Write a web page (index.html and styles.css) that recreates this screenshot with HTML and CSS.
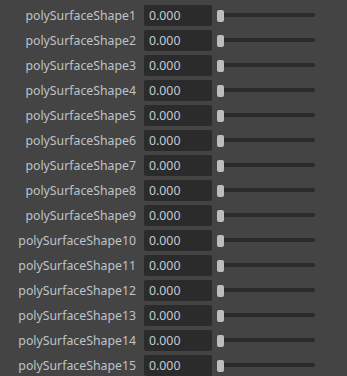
FILE: index.html
```html
<!DOCTYPE html>
<html lang="en">

<head>
    <meta charset="UTF-8">
    <title>Blend Shapes</title>
    <link rel="stylesheet" href="styles.css">
</head>

<body>
    <div class="panel">
        <div class="row"><label class="name">polySurfaceShape1</label><div class="field">0.000</div><div class="slider"><span class="track"></span><span class="handle"></span></div></div>
        <div class="row"><label class="name">polySurfaceShape2</label><div class="field">0.000</div><div class="slider"><span class="track"></span><span class="handle"></span></div></div>
        <div class="row"><label class="name">polySurfaceShape3</label><div class="field">0.000</div><div class="slider"><span class="track"></span><span class="handle"></span></div></div>
        <div class="row"><label class="name">polySurfaceShape4</label><div class="field">0.000</div><div class="slider"><span class="track"></span><span class="handle"></span></div></div>
        <div class="row"><label class="name">polySurfaceShape5</label><div class="field">0.000</div><div class="slider"><span class="track"></span><span class="handle"></span></div></div>
        <div class="row"><label class="name">polySurfaceShape6</label><div class="field">0.000</div><div class="slider"><span class="track"></span><span class="handle"></span></div></div>
        <div class="row"><label class="name">polySurfaceShape7</label><div class="field">0.000</div><div class="slider"><span class="track"></span><span class="handle"></span></div></div>
        <div class="row"><label class="name">polySurfaceShape8</label><div class="field">0.000</div><div class="slider"><span class="track"></span><span class="handle"></span></div></div>
        <div class="row"><label class="name">polySurfaceShape9</label><div class="field">0.000</div><div class="slider"><span class="track"></span><span class="handle"></span></div></div>
        <div class="row"><label class="name">polySurfaceShape10</label><div class="field">0.000</div><div class="slider"><span class="track"></span><span class="handle"></span></div></div>
        <div class="row"><label class="name">polySurfaceShape11</label><div class="field">0.000</div><div class="slider"><span class="track"></span><span class="handle"></span></div></div>
        <div class="row"><label class="name">polySurfaceShape12</label><div class="field">0.000</div><div class="slider"><span class="track"></span><span class="handle"></span></div></div>
        <div class="row"><label class="name">polySurfaceShape13</label><div class="field">0.000</div><div class="slider"><span class="track"></span><span class="handle"></span></div></div>
        <div class="row"><label class="name">polySurfaceShape14</label><div class="field">0.000</div><div class="slider"><span class="track"></span><span class="handle"></span></div></div>
        <div class="row"><label class="name">polySurfaceShape15</label><div class="field">0.000</div><div class="slider"><span class="track"></span><span class="handle"></span></div></div>
    </div>
</body>

</html>
```

FILE: styles.css
```css
body {
    margin: 0;
    background-color: #444444;
    font-family: 'Noto Sans', 'Open Sans', sans-serif;
    font-size: 12.3px;
    color: #bfc3c8;
    overflow: hidden;
}

.panel {
    display: flex;
    flex-direction: column;
    gap: 4px;
    padding-top: 5px;
}

.row {
    display: flex;
    align-items: center;
    height: 21px;
}

.name {
    width: 136px;
    text-align: right;
    white-space: nowrap;
    margin-right: 8px;
}

.field {
    width: 68px;
    height: 21px;
    box-sizing: border-box;
    padding-left: 5px;
    line-height: 21px;
    background-color: #2b2b2b;
    border-radius: 2px;
    color: #c4ccd4;
}

.slider {
    position: relative;
    margin-left: 5px;
    width: 98px;
    height: 21px;
}

.track {
    position: absolute;
    left: 3px;
    right: 0;
    top: 8px;
    height: 4px;
    border-radius: 2px;
    background-color: #2b2b2b;
}

.handle {
    position: absolute;
    left: 0;
    top: 5px;
    width: 7px;
    height: 12px;
    border-radius: 2px;
    background-color: #bdbdbd;
}
```
